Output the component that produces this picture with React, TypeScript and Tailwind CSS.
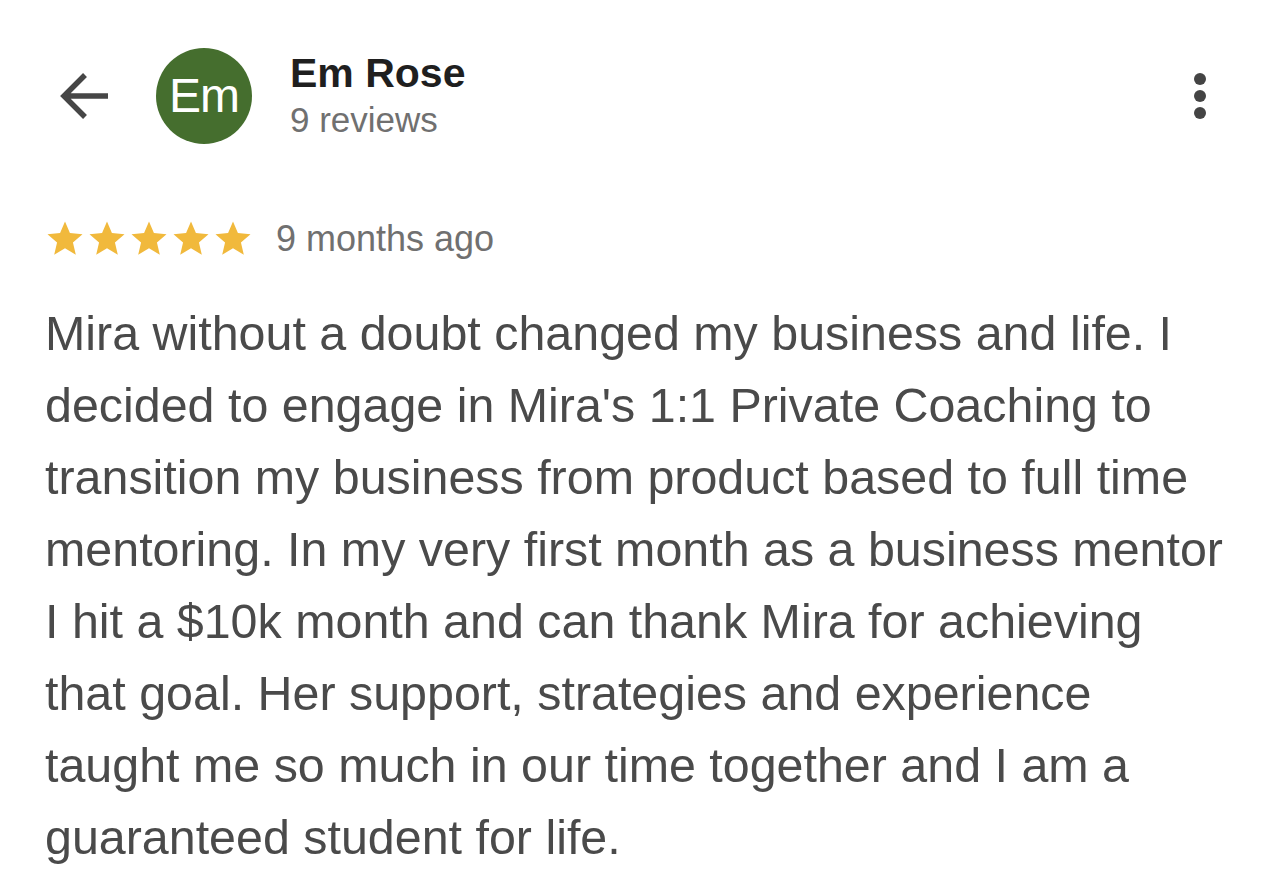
import React from "react";

const lines = [
  "Mira without a doubt changed my business and life. I",
  "decided to engage in Mira's 1:1 Private Coaching to",
  "transition my business from product based to full time",
  "mentoring. In my very first month as a business mentor",
  "I hit a $10k month and can thank Mira for achieving",
  "that goal. Her support, strategies and experience",
  "taught me so much in our time together and I am a",
  "guaranteed student for life.",
];

const Star = () => (
  <svg width="42" height="42" viewBox="0 0 24 24" className="shrink-0">
    <path
      fill="#f1b93c"
      d="M12 17.27L18.18 21l-1.64-7.03L22 9.24l-7.19-.61L12 2 9.19 8.63 2 9.24l5.46 4.73L5.82 21z"
    />
  </svg>
);

export default function App() {
  return (
    <div
      className="w-[1284px] h-[887px] bg-white overflow-hidden"
      style={{ fontFamily: '"Liberation Sans", Arial, sans-serif' }}
    >
      {/* header */}
      <div className="flex items-center justify-between mt-[48px] pl-[58px] pr-[78px]">
        <div className="flex items-center">
          <svg width="52" height="52" viewBox="0 0 52 52" className="shrink-0">
            <path
              d="M50 26H7M27 5L6 26l21 21"
              fill="none"
              stroke="#464646"
              strokeWidth="5.5"
              strokeLinecap="butt"
              strokeLinejoin="miter"
            />
          </svg>
          <div className="ml-[46px] w-[96px] h-[96px] rounded-full bg-[#456e2e] flex items-center justify-center shrink-0">
            <span className="text-white text-[48px] leading-none tracking-[-1px]">Em</span>
          </div>
          <div className="ml-[38px] flex flex-col">
            <span className="text-[41px] leading-[46px] font-bold text-[#1f1f1f]">Em Rose</span>
            <span className="mt-[2px] text-[35px] leading-[44px] text-[#707070]">9 reviews</span>
          </div>
        </div>
        <div className="flex flex-col items-center gap-[5px]">
          <span className="w-[12px] h-[12px] rounded-full bg-[#444]" />
          <span className="w-[12px] h-[12px] rounded-full bg-[#444]" />
          <span className="w-[12px] h-[12px] rounded-full bg-[#444]" />
        </div>
      </div>

      {/* rating */}
      <div className="flex items-center mt-[75px] pl-[44px] h-[40px]">
        <div className="flex">
          <Star />
          <Star />
          <Star />
          <Star />
          <Star />
        </div>
        <span className="ml-[22px] text-[36px] leading-[40px] text-[#707070]">9 months ago</span>
      </div>

      {/* body */}
      <div className="mt-[38px] pl-[45px] text-[48.4px] leading-[72px] text-[#4a4a4a]">
        {lines.map((l, i) => (
          <span key={i} className="block whitespace-nowrap">
            {l}
          </span>
        ))}
      </div>
    </div>
  );
}
